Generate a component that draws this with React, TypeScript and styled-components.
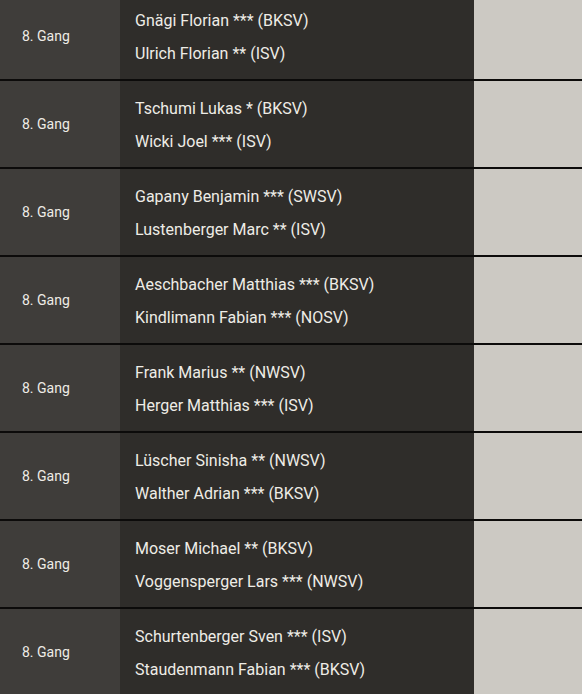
import React from "react";
import styled, { createGlobalStyle } from "styled-components";

const Global = createGlobalStyle`
  html, body { margin: 0; padding: 0; background: #2f2d2a; }
  body { font-family: Roboto, "Noto Sans", sans-serif; overflow: hidden; }
`;

const Table = styled.div`
  margin-top: -7px;
  display: flex;
  flex-direction: column;
`;

const Row = styled.div`
  display: grid;
  grid-template-columns: 120px 354px 1fr;
  height: 86px;
  border-bottom: 2px solid #0c0b0a;
`;

const RoundCell = styled.div`
  background: #3f3d3a;
  color: #eeece6;
  font-size: 14px;
  display: flex;
  align-items: center;
  padding-left: 22px;
`;

const PairCell = styled.div`
  background: #2f2d2a;
  color: #eeece6;
  font-size: 16px;
  display: flex;
  flex-direction: column;
  justify-content: center;
  gap: 14px;
  padding-left: 15px;
  padding-top: 2px;
`;

const Name = styled.div`
  line-height: 19px;
`;

const Blank = styled.div`
  background: #ccc9c3;
`;

const data: [string, string][] = [
  ["Gnägi Florian *** (BKSV)", "Ulrich Florian ** (ISV)"],
  ["Tschumi Lukas * (BKSV)", "Wicki Joel *** (ISV)"],
  ["Gapany Benjamin *** (SWSV)", "Lustenberger Marc ** (ISV)"],
  ["Aeschbacher Matthias *** (BKSV)", "Kindlimann Fabian *** (NOSV)"],
  ["Frank Marius ** (NWSV)", "Herger Matthias *** (ISV)"],
  ["Lüscher Sinisha ** (NWSV)", "Walther Adrian *** (BKSV)"],
  ["Moser Michael ** (BKSV)", "Voggensperger Lars *** (NWSV)"],
  ["Schurtenberger Sven *** (ISV)", "Staudenmann Fabian *** (BKSV)"],
];

export default function App() {
  return (
    <>
      <Global />
      <Table>
        {data.map(([a, b], i) => (
          <Row key={i}>
            <RoundCell>8. Gang</RoundCell>
            <PairCell>
              <Name>{a}</Name>
              <Name>{b}</Name>
            </PairCell>
            <Blank />
          </Row>
        ))}
      </Table>
    </>
  );
}
